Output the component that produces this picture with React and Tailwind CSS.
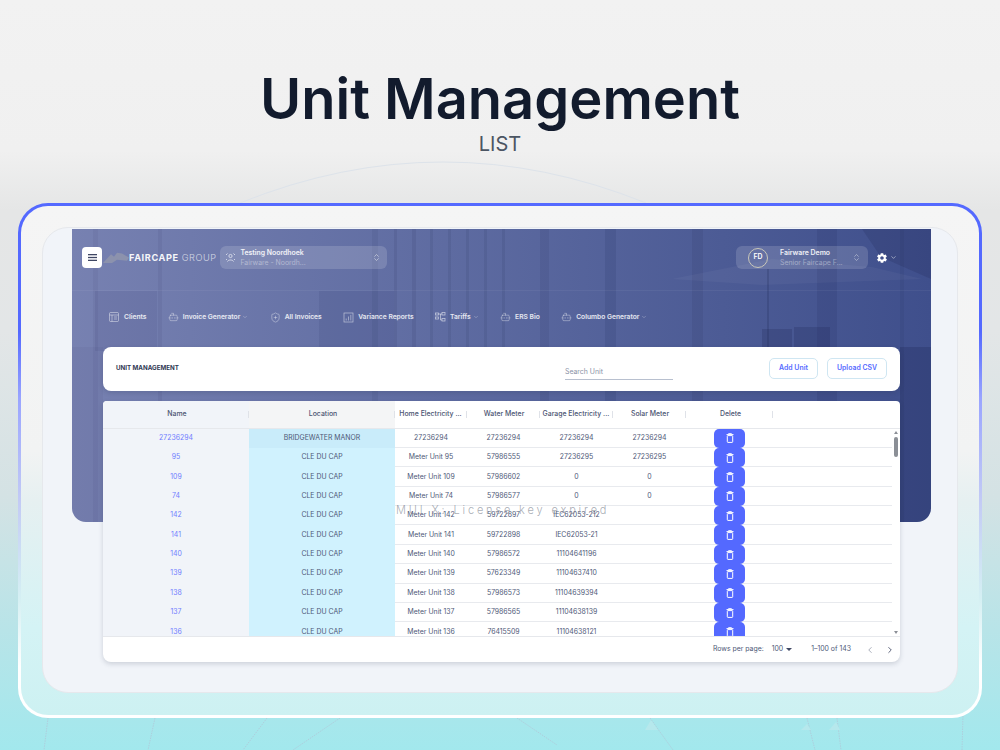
import { Bot, ChevronDown, ChevronLeft, ChevronRight, ChevronsUpDown, ShieldPlus } from "lucide-react";
import { IoMdSettings } from "react-icons/io";

const rows = [
  ["27236294", "BRIDGEWATER MANOR", "27236294", "27236294", "27236294", "27236294"],
  ["95", "CLE DU CAP", "Meter Unit 95", "57986555", "27236295", "27236295"],
  ["109", "CLE DU CAP", "Meter Unit 109", "57986602", "0", "0"],
  ["74", "CLE DU CAP", "Meter Unit 74", "57986577", "0", "0"],
  ["142", "CLE DU CAP", "Meter Unit 142", "59722897", "IEC62053-212", ""],
  ["141", "CLE DU CAP", "Meter Unit 141", "59722898", "IEC62053-21", ""],
  ["140", "CLE DU CAP", "Meter Unit 140", "57986572", "11104641196", ""],
  ["139", "CLE DU CAP", "Meter Unit 139", "57623349", "11104637410", ""],
  ["138", "CLE DU CAP", "Meter Unit 138", "57986573", "11104639394", ""],
  ["137", "CLE DU CAP", "Meter Unit 137", "57986565", "11104638139", ""],
  ["136", "CLE DU CAP", "Meter Unit 136", "76415509", "11104638121", ""],
];

const gridCols = "grid grid-cols-[146px_146px_72px_73px_73px_73px_87px]";

// backdrop photo of the hero, only rough shapes
const darkBars = [
  [21, 0, 5, 293, 0.06], [86, 0, 4, 293, 0.07], [300, 0, 6, 293, 0.08], [322, 0, 3, 118, 0.1], [340, 0, 4, 118, 0.1],
  [358, 0, 3, 118, 0.1], [376, 0, 3, 118, 0.1], [394, 0, 3, 118, 0.1], [412, 0, 3, 118, 0.1], [430, 0, 3, 118, 0.1],
  [468, 0, 9, 293, 0.1], [533, 0, 11, 293, 0.12], [620, 0, 11, 293, 0.1], [745, 0, 20, 293, 0.12], [828, 0, 4, 293, 0.08],
];

function HeroPhoto() {
  return (
    <svg className="absolute inset-0 h-full w-full" viewBox="0 0 859 293" preserveAspectRatio="none">
      {darkBars.map(([x, y, w, h, o]) => (
        <rect key={x} x={x} y={y} width={w} height={h} fill="#1b2350" opacity={o} />
      ))}
      <rect x="23" y="62" width="62" height="60" fill="#2d3468" opacity="0.1" />
      <rect x="247" y="62" width="75" height="60" fill="#2d3468" opacity="0.12" />
      <rect x="0" y="61" width="859" height="1" fill="#ffffff" opacity="0.05" />
      <path d="M600 50 L700 30 L800 38 L850 50 L690 56 Z" fill="#ffffff" opacity="0.04" />
      <rect x="695" y="40" width="2" height="80" fill="#1b2350" opacity="0.2" />
      <path d="M690 100 h30 v18 h-30 z M722 98 h36 v20 h-36 z" fill="#1b2350" opacity="0.22" />
      <path d="M790 0 h69 v50 l-50 -22 z" fill="#1b2350" opacity="0.18" />
      <rect x="828" y="118" width="31" height="175" fill="#1b2350" opacity="0.24" />
      <rect x="0" y="118" width="31" height="175" fill="#2d3468" opacity="0.06" />
    </svg>
  );
}

function HamburgerIcon() {
  return (
    <svg width="9" height="7" viewBox="0 0 9 7" fill="#3f4763">
      <rect width="9" height="1.3" />
      <rect y="2.85" width="9" height="1.3" />
      <rect y="5.7" width="9" height="1.3" />
    </svg>
  );
}

function ClientsIcon() {
  return (
    <svg width="11" height="11" viewBox="0 0 11 11" fill="none" stroke="currentColor" strokeWidth="0.7">
      <rect x="0.5" y="0.5" width="9" height="9" rx="1" />
      <path d="M0.5 3h9M3 3v6.5M5 5h3M5 7h3" />
    </svg>
  );
}

function ChartIcon() {
  return (
    <svg width="11" height="11" viewBox="0 0 11 11" fill="none" stroke="currentColor" strokeWidth="0.7">
      <rect x="1" y="1" width="9" height="9" />
      <path d="M3.2 8.5V6.5M5.5 8.5V4.5M7.8 8.5V2.8" />
    </svg>
  );
}

function TariffsIcon() {
  return (
    <svg width="11" height="10" viewBox="0 0 11 10" fill="none" stroke="currentColor" strokeWidth="0.8">
      <rect x="0.5" y="1" width="3" height="2" />
      <rect x="0.5" y="5" width="3" height="2" />
      <rect x="7" y="0.5" width="3" height="2.5" />
      <rect x="7" y="6.5" width="3" height="2.5" />
      <path d="M3.5 2H7M5.500 2V8H7" />
    </svg>
  );
}

function TrashIcon() {
  return (
    <svg width="8" height="10" viewBox="0 0 8 10" fill="none" stroke="white" strokeWidth="1">
      <path d="M0.5 1.6h7" />
      <path d="M2.600 1.200V0.500h2.800v0.700" strokeWidth="0.8" />
      <rect x="1.300" y="2.600" width="5.400" height="6.800" rx="0.700" />
    </svg>
  );
}

function NavItem({ icon, label, caret }) {
  return (
    <div className="flex items-center gap-[4px]">
      <span className="flex w-[11px] justify-center text-white/60">{icon}</span>
      <span className="text-[6.7px] font-semibold text-white/85">{label}</span>
      {caret && <ChevronDown size={6} className="-ml-[2px] text-white/50" />}
    </div>
  );
}

function TableRow({ row, index }) {
  const first = index === 0;
  return (
    <div className={`${gridCols} h-[19.4px] shrink-0 items-stretch border-b border-[#e8eaee] text-center text-[6.9px] leading-none text-[#4e5877]`}>
      <div className="flex items-center justify-center bg-[#f1f4f9] text-[#6f7cff]">{row[0]}</div>
      <div className={`flex items-center justify-center ${first ? "bg-[#c9ecfa]" : "bg-[#d0f2fe]"}`}>{row[1]}</div>
      <div className="flex items-center justify-center">{row[2]}</div>
      <div className="flex items-center justify-center">{row[3]}</div>
      <div className="flex items-center justify-center">{row[4]}</div>
      <div className="flex items-center justify-center">{row[5]}</div>
      <div className="flex items-center justify-center">
        <div className="flex h-[19.4px] w-[31px] items-center justify-center rounded-[5px] bg-[#5469ff]">
          <TrashIcon />
        </div>
      </div>
    </div>
  );
}

function HeaderCell({ label, className }) {
  return (
    <div className={`flex items-center text-[6.9px] font-medium text-[#4b5472] ${className || ""}`}>
      <span className="flex-1 text-center whitespace-nowrap">{label}</span>
      <span className="h-[7px] w-px bg-[#dfe2e8]" />
    </div>
  );
}

function DataTable() {
  return (
    <div className="relative mt-[10px] overflow-hidden rounded-b-lg rounded-t-sm bg-white shadow-[0_2px_5px_rgba(40,50,80,0.18)]">
      <div className={`${gridCols} h-[27.5px] border-b border-[#e6e8ec]`}>
        <HeaderCell label="Name" className="bg-[#f1f4f9] pl-[3px]" />
        <HeaderCell label="Location" className="bg-[#f4f5f6] pl-[3px]" />
        <HeaderCell label="Home Electricity ..." />
        <HeaderCell label="Water Meter" className="pl-[2px]" />
        <HeaderCell label="Garage Electricity ..." />
        <HeaderCell label="Solar Meter" className="pl-[2px]" />
        <HeaderCell label="Delete" className="pl-[3px]" />
      </div>
      <div className="flex h-[207.5px]">
        <div className="flex-1 overflow-hidden">
          {rows.map((row, i) => (
            <TableRow key={row[0]} row={row} index={i} />
          ))}
        </div>
        <div className="flex w-[8px] flex-col items-center pt-[2px]">
          <div className="h-0 w-0 border-x-[2px] border-b-[3px] border-x-transparent border-b-[#8b8f96]" />
          <div className="mt-[3px] h-[20px] w-[4px] rounded-sm bg-[#8b8f96]" />
          <div className="mb-[2px] mt-auto h-0 w-0 border-x-[2px] border-t-[3px] border-x-transparent border-t-[#8b8f96]" />
        </div>
      </div>
      <div className="flex h-[26px] items-center justify-end border-t border-[#e6e8ec] pr-[5px] text-[6.9px] text-[#4e5877]">
        <span>Rows per page:</span>
        <span className="ml-[8px]">100</span>
        <span className="ml-[3px] h-0 w-0 border-x-[3px] border-t-[3px] border-x-transparent border-t-[#3f4763]" />
        <span className="ml-[19px]">1–100 of 143</span>
        <ChevronLeft size={10} className="ml-[14px] text-[#9aa0ae]" />
        <ChevronRight size={10} className="ml-[10px] text-[#3f4763]" />
      </div>
      <div className="pointer-events-none absolute left-[293px] top-[101px] text-[11px] font-light tracking-[2.85px] whitespace-nowrap text-[#6b7280]/60">
        MUI X: License key expired
      </div>
    </div>
  );
}

export default function App() {
  return (
    <div className="relative h-[750px] w-[1000px] overflow-hidden bg-[linear-gradient(to_bottom,#f2f2f2_0%,#f0f0f0_20%,#e5e6e6_28%,#e3e6e7_44%,#d4e2e4_66%,#b8e4e8_84%,#a2e8ed_100%)] font-['Inter',sans-serif]">
      <svg className="absolute inset-0" width="1000" height="750" fill="none">
        <path d="M240 203 Q443 121 646 203" stroke="#dde3ea" strokeWidth="1" />
        <path d="M48 718 L44 750 M155 718 L148 750 M267 718 L243 750 M340 718 L293 750 M517 718 L557 745 M650 718 L673 750 M807 718 L815 750 M837 718 L841 750 M963 716 L962 750" stroke="#b9aac6" strokeWidth="0.6" strokeDasharray="1.5 1" opacity="0.7" />
        <path d="M645 730 L651 720 L658 730 Z M801 730 L807 724 L811 730 Z M829 730 L836 722 L840 730 Z" fill="#b6e8ec" />
      </svg>

      <div className="relative flex flex-col items-center pt-[65px]">
        <h1 className="text-[56px] font-semibold leading-[68px] text-[#121b2d]">Unit Management</h1>
        <div className="-mt-[1px] text-[20px] leading-[24px] text-[#4b5563]">LIST</div>
      </div>

      <div className="relative mx-[18px] mt-[47px] h-[515px] rounded-[30px] bg-[linear-gradient(to_bottom,#5469ff_25%,#9aa5ff_38%,#c3cbf5_58%,#d5f0f3_77%,#ffffff_90%)] p-[3px]">
        <div className="h-full rounded-[27px] bg-[linear-gradient(to_bottom,#f5f5f5_0%,#f2f3f3_48%,#e6f0f1_58%,#d4f3f5_83%,#cdf1f2_100%)] px-[21px] pt-[21px]">
          <div className="h-[466px] rounded-[26px] border border-[#e6e8ec] bg-[#f1f4f9] pl-[29px] pr-[26px] pt-[1px]">
            <div className="relative h-[293px] overflow-hidden rounded-b-[14px] bg-gradient-to-r from-[#7781b1] to-[#3f4f8c]">
              <HeroPhoto />
              <div className="relative flex items-center pl-[10px] pr-[34px] pt-[17px]">
                <div className="flex h-[21px] w-[20px] items-center justify-center rounded-[4px] bg-white">
                  <HamburgerIcon />
                </div>
                <svg width="26" height="11" viewBox="0 0 26 14" preserveAspectRatio="none" className="ml-[1px]">
                  <path d="M0 14 L8 3 L11 6 L14 1 L19 2 L26 7 L24 11 L14 10 L9 14 Z" fill="#8c92ad" />
                </svg>
                <span className="text-[9.2px] font-bold tracking-[0.6px] text-white/95">FAIRCAPE</span>
                <span className="ml-[3px] text-[9.2px] font-light tracking-[0.5px] text-white/70">GROUP</span>
                <div className="ml-[4px] flex h-[23px] w-[167px] items-center rounded-[6px] bg-white/15 pl-[4px] pr-[6px]">
                  <svg width="11" height="11" viewBox="0 0 11 11" fill="none" stroke="#e5e7f3" strokeWidth="0.8" className="ml-[1px]">
                    <circle cx="5.5" cy="4" r="1.6" />
                    <path d="M2.5 9.5c.5-2 5.500-2 6 0M1 3l1.500-1.500M10 3L8.500 1.500M1 7l1 1M10 7l-1 1" />
                  </svg>
                  <div className="ml-[4px] flex-1 leading-none">
                    <div className="text-[6.9px] font-semibold leading-[10px] text-white/90">Testing Noordhoek</div>
                    <div className="text-[6.9px] leading-[10px] text-white/40">Fairware - Noordh...</div>
                  </div>
                  <ChevronsUpDown size={9} className="text-white/60" />
                </div>
                <div className="ml-auto flex h-[23px] w-[132px] items-center rounded-[6px] bg-white/15 pl-[12px] pr-[7px]">
                  <div className="flex h-[20px] w-[20px] items-center justify-center rounded-full border border-[#c9c7b9] text-[6.9px] font-semibold text-white">
                    FD
                  </div>
                  <div className="ml-[12px] flex-1 leading-none">
                    <div className="text-[6.9px] font-semibold leading-[10px] text-white/90">Fairware Demo</div>
                    <div className="text-[6.9px] leading-[10px] text-white/40">Senior Faircape F...</div>
                  </div>
                  <ChevronsUpDown size={9} className="text-white/50" />
                </div>
                <IoMdSettings size={12} className="ml-[8px] text-white" />
                <ChevronDown size={7} className="ml-[2px] text-white/80" />
              </div>
              <div className="relative mt-[42px] flex items-center gap-[21.4px] pl-[37px]">
                <NavItem icon={<ClientsIcon />} label="Clients" />
                <NavItem icon={<Bot size={12} strokeWidth={1.3} />} label="Invoice Generator" caret />
                <NavItem icon={<ShieldPlus size={11} strokeWidth={1.3} />} label="All Invoices" />
                <NavItem icon={<ChartIcon />} label="Variance Reports" />
                <NavItem icon={<TariffsIcon />} label="Tariffs" caret />
                <NavItem icon={<Bot size={12} strokeWidth={1.3} />} label="ERS Bio" />
                <NavItem icon={<Bot size={12} strokeWidth={1.3} />} label="Columbo Generator" caret />
              </div>
            </div>

            <div className="relative mx-[31px] -mt-[175px]">
              <div className="flex h-[44px] items-start rounded-lg bg-white pl-[13px] pr-[13px] shadow-[0_2px_5px_rgba(40,50,80,0.2)]">
                <div className="mt-[17px] text-[6.2px] font-bold leading-[8px] text-[#2f3752]">UNIT MANAGEMENT</div>
                <div className="ml-auto mt-[20px] w-[108px] border-b border-[#b8c0cf] pb-[3px] text-[6.9px] leading-[9px] text-[#8a92a6]">Search Unit</div>
                <button className="ml-[96px] mt-[11px] h-[21px] w-[49px] rounded-[5px] border border-[#cfe6f2] text-[6.9px] font-semibold text-[#5469ff]">Add Unit</button>
                <button className="ml-[9px] mt-[11px] h-[21px] w-[60px] rounded-[5px] border border-[#cfe6f2] text-[6.9px] font-semibold text-[#5469ff]">Upload CSV</button>
              </div>
              <DataTable />
            </div>
          </div>
        </div>
      </div>
    </div>
  );
}
